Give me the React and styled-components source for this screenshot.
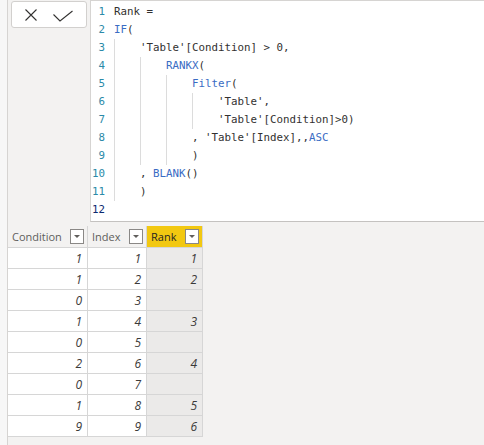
import React from 'react';
import styled, { createGlobalStyle } from 'styled-components';

const GlobalStyle = createGlobalStyle`
  html, body {
    margin: 0;
    padding: 0;
    background: #f3f2f1;
    overflow: hidden;
  }
`;

const Page = styled.div`
  display: flex;
  width: 484px;
  height: 445px;
  background: #f3f2f1;
`;

const Rail = styled.div`
  width: 7px;
  flex: none;
  background: #f7f7f7;
  border-right: 1px solid #d6d4d2;
`;

const Main = styled.div`
  flex: 1;
  display: flex;
  flex-direction: column;
  min-width: 0;
`;

const FormulaBar = styled.div`
  display: flex;
  align-items: flex-start;
`;

const ButtonBox = styled.div`
  box-sizing: border-box;
  width: 76px;
  height: 27px;
  margin: 1px 3px 0 3px;
  padding-left: 13px;
  display: flex;
  align-items: center;
  gap: 16px;
  background: #ffffff;
  border: 1px solid #d2d0ce;
  border-radius: 3px;
  flex: none;
`;

const Editor = styled.div`
  box-sizing: border-box;
  flex: 1;
  height: 222px;
  display: flex;
  padding-top: 2px;
  background: #ffffff;
  border: 1px solid #d6d4d2;
  border-right: none;
  border-bottom-color: #c4c2c0;
  font-family: "DejaVu Sans Mono", "Liberation Mono", monospace;
  font-size: 10.8px;
  line-height: 18px;
`;

const Gutter = styled.div`
  width: 14px;
  flex: none;
  text-align: right;
`;

const LineNo = styled.div`
  color: ${(p) => (p.$active ? '#0b2a6f' : '#2b8aa8')};
`;

const Code = styled.div`
  padding-left: 9px;
  color: #323130;
  white-space: pre;
`;

const CodeLine = styled.div`
  height: 18px;
  display: flex;
`;

const Indent = styled.span`
  box-sizing: border-box;
  display: inline-block;
  width: 4ch;
  height: 18px;
  border-left: 1px solid #dcdcdc;
`;

const Token = styled.span`
  color: ${(p) => (p.$kind === 'k' ? '#3a6cc4' : '#323130')};
`;

const TableArea = styled.div`
  padding-top: 4px;
`;

const Grid = styled.div`
  display: inline-grid;
  grid-template-columns: 79px 58px 55px;
  grid-template-rows: 21px;
  grid-auto-rows: 20px;
  gap: 1px;
  padding: 0 1px 1px 0;
  background: #d6d6d6;
  font-family: "Open Sans", "Noto Sans", sans-serif;
  font-size: 11px;
`;

const HeaderCell = styled.div`
  display: flex;
  align-items: center;
  justify-content: space-between;
  padding: 0 3px 0 4px;
  background: ${(p) => (p.$highlight ? '#f2c811' : '#f3f2f1')};
  color: ${(p) => (p.$highlight ? '#252423' : '#605e5c')};
`;

const DropBox = styled.span`
  box-sizing: border-box;
  width: 14px;
  height: 15px;
  display: flex;
  align-items: center;
  justify-content: center;
  background: #ffffff;
  border: 1px solid #8a8886;
`;

const Caret = styled.span`
  width: 0;
  height: 0;
  border-left: 3px solid transparent;
  border-right: 3px solid transparent;
  border-top: 3px solid #605e5c;
`;

const Cell = styled.div`
  display: flex;
  align-items: center;
  justify-content: flex-end;
  padding-right: 5px;
  font-style: italic;
  font-size: 12px;
  color: #3b3a39;
  background: ${(p) => (p.$shade ? '#ebeae9' : '#ffffff')};
`;

const lines = [
  { indent: 0, tokens: [['Rank =', 'p']] },
  { indent: 0, tokens: [['IF', 'k'], ['(', 'p']] },
  { indent: 1, tokens: [["'Table'[Condition] > 0,", 'p']] },
  { indent: 2, tokens: [['RANKX', 'k'], ['(', 'p']] },
  { indent: 3, tokens: [['Filter', 'k'], ['(', 'p']] },
  { indent: 4, tokens: [["'Table',", 'p']] },
  { indent: 4, tokens: [["'Table'[Condition]>0)", 'p']] },
  { indent: 3, tokens: [[", 'Table'[Index],,", 'p'], ['ASC', 'k']] },
  { indent: 3, tokens: [[')', 'p']] },
  { indent: 1, tokens: [[', ', 'p'], ['BLANK', 'k'], ['()', 'p']] },
  { indent: 1, tokens: [[')', 'p']] },
  { indent: 0, tokens: [] },
];

const rows = [
  [1, 1, 1],
  [1, 2, 2],
  [0, 3, ''],
  [1, 4, 3],
  [0, 5, ''],
  [2, 6, 4],
  [0, 7, ''],
  [1, 8, 5],
  [9, 9, 6],
];

const CrossIcon = () => (
  <svg width="12" height="12" viewBox="0 0 12 12">
    <path d="M0.5 0.5 L11.5 11.5 M11.5 0.5 L0.5 11.5" stroke="#323130" strokeWidth="1.1" fill="none" />
  </svg>
);

const CheckIcon = () => (
  <svg width="20" height="12" viewBox="0 0 20 12" style={{ marginTop: 2 }}>
    <path d="M0.5 4.5 L7 11 L19.5 1" stroke="#323130" strokeWidth="1.1" fill="none" />
  </svg>
);

function Header({ label, highlight }) {
  return (
    <HeaderCell $highlight={highlight}>
      <span>{label}</span>
      <DropBox>
        <Caret />
      </DropBox>
    </HeaderCell>
  );
}

export default function App() {
  return (
    <Page>
      <GlobalStyle />
      <Rail />
      <Main>
        <FormulaBar>
          <ButtonBox>
            <CrossIcon />
            <CheckIcon />
          </ButtonBox>
          <Editor>
            <Gutter>
              {lines.map((l, i) => (
                <LineNo key={i} $active={i === lines.length - 1}>
                  {i + 1}
                </LineNo>
              ))}
            </Gutter>
            <Code>
              {lines.map((l, i) => (
                <CodeLine key={i}>
                  {Array.from({ length: l.indent }).map((_, j) => (
                    <Indent key={j} />
                  ))}
                  {l.tokens.map(([text, kind], j) => (
                    <Token key={j} $kind={kind}>
                      {text}
                    </Token>
                  ))}
                </CodeLine>
              ))}
            </Code>
          </Editor>
        </FormulaBar>
        <TableArea>
          <Grid>
            <Header label="Condition" />
            <Header label="Index" />
            <Header label="Rank" highlight />
            {rows.map((r, i) => (
              <React.Fragment key={i}>
                <Cell>{r[0]}</Cell>
                <Cell>{r[1]}</Cell>
                <Cell $shade>{r[2]}</Cell>
              </React.Fragment>
            ))}
          </Grid>
        </TableArea>
      </Main>
    </Page>
  );
}
